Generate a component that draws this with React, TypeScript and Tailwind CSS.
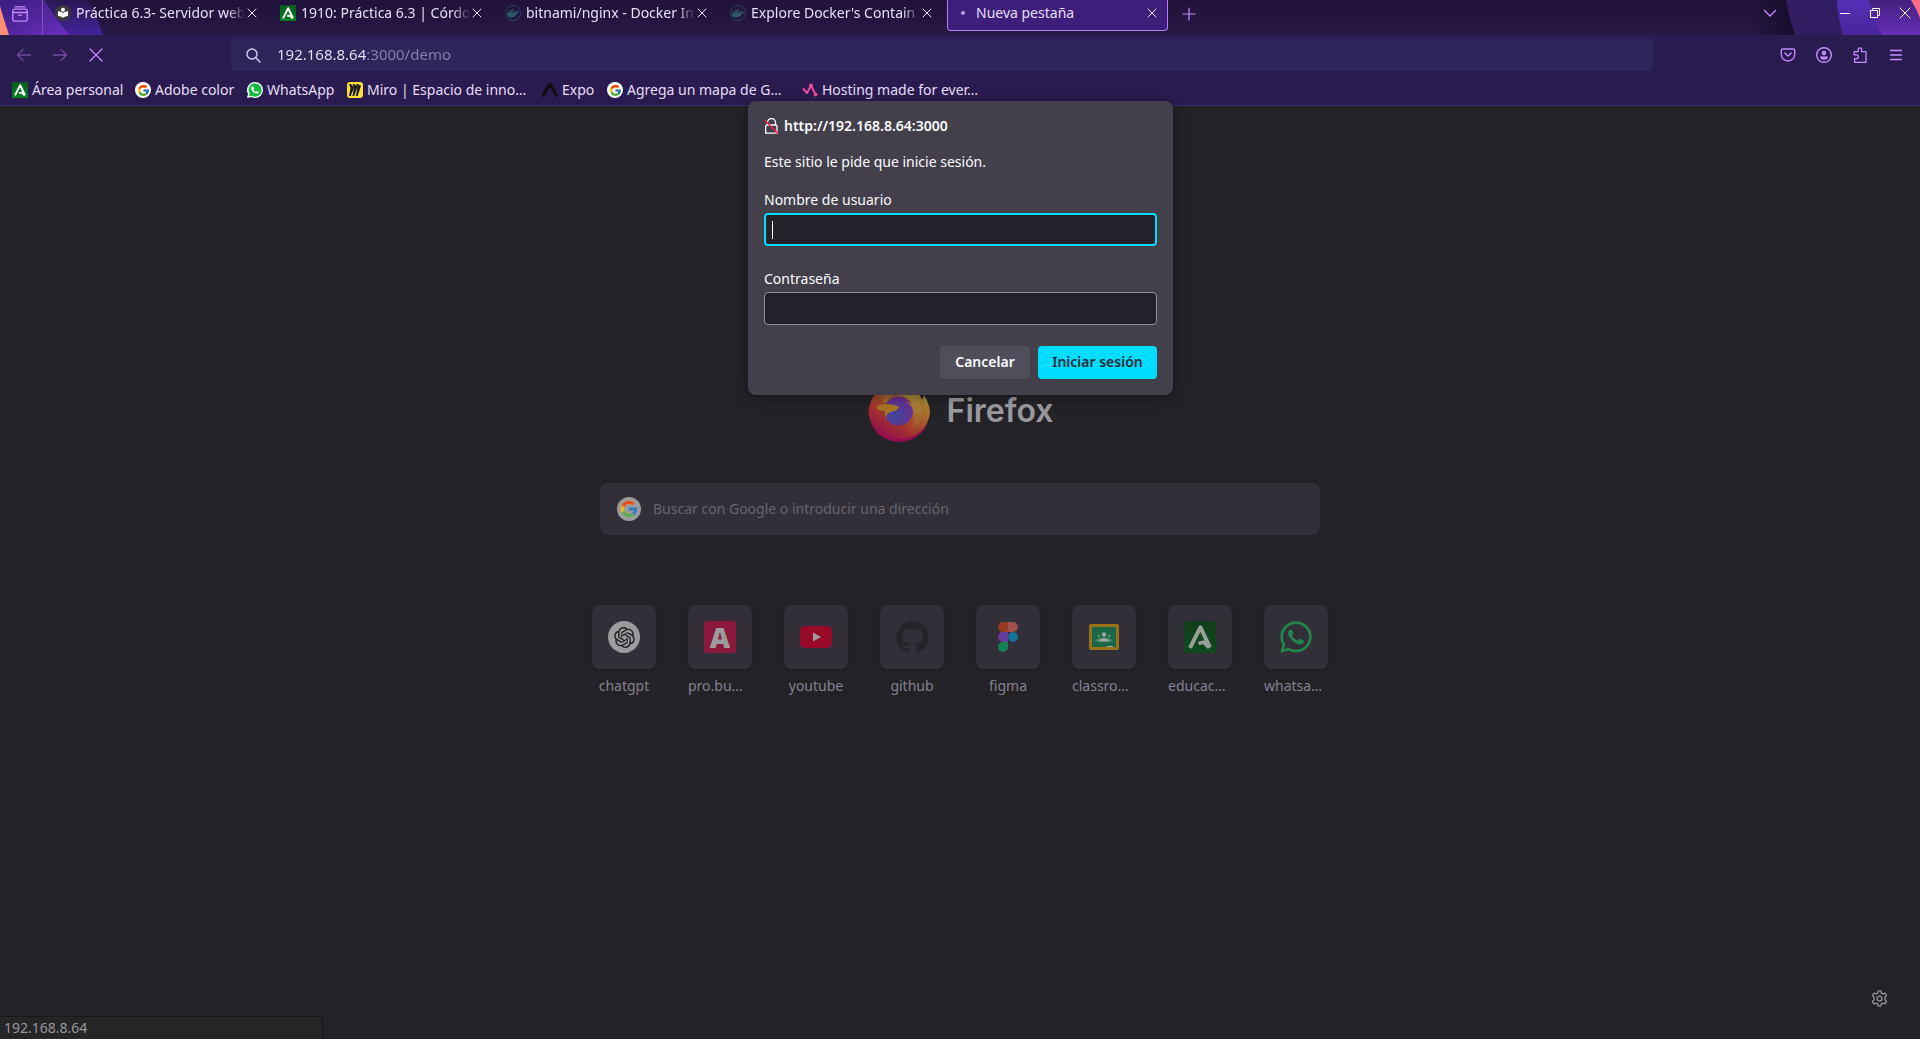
import type { ReactNode } from 'react';
import { FcGoogle } from 'react-icons/fc';
import { FaGithub, FaWhatsapp } from 'react-icons/fa';
import { RiOpenaiFill } from 'react-icons/ri';
import { SiDocker, SiMiro, SiExpo } from 'react-icons/si';

function Cross({ size = 16, inset = 4, width = 1 }: { size?: number; inset?: number; width?: number }) {
  const b = size - inset;
  return (
    <svg width={size} height={size} viewBox={`0 0 ${size} ${size}`} stroke="currentColor" strokeWidth={width} strokeLinecap="round">
      <path d={`M${inset} ${inset}L${b} ${b}M${b} ${inset}L${inset} ${b}`} />
    </svg>
  );
}

function AndaluciaIcon({ size = 16, round = 0, from = '#0a5a22', to = '#00801f', fg = '#fff' }: { size?: number; round?: number; from?: string; to?: string; fg?: string }) {
  const id = `and-${size}`;
  return (
    <svg width={size} height={size} viewBox="0 0 16 16">
      <defs>
        <linearGradient id={id} x1="0" y1="0" x2="0" y2="1">
          <stop offset="0" stopColor={from} />
          <stop offset="1" stopColor={to} />
        </linearGradient>
      </defs>
      <rect width="16" height="16" rx={round} fill={`url(#${id})`} />
      <path d="M3 13.4L8.2 3.2L13 13.2" fill="none" stroke={fg} strokeWidth="2" strokeLinejoin="round" />
      <path d="M7.2 11.2L9.8 10.6L12.6 13.4" fill="none" stroke={fg} strokeWidth="1.8" />
    </svg>
  );
}

function DockerIcon() {
  return (
    <span className="flex size-4 items-center justify-center rounded-full border border-[#25465c] text-[#2b5a68]">
      <SiDocker size={12} />
    </span>
  );
}

function BookIcon() {
  return (
    <svg width="16" height="16" viewBox="0 0 16 16">
      <circle cx="8" cy="8" r="8" fill="#3b3b3f" />
      <circle cx="8" cy="4.8" r="2" fill="#fff" />
      <path d="M3 6.2Q6 6 8 8Q10 6 13 6.2V11Q10 11 8 12.8Q6 11 3 11Z" fill="#fff" />
    </svg>
  );
}

function GoogleBadge() {
  return (
    <span className="flex size-4 items-center justify-center rounded-full bg-white">
      <FcGoogle size={13} />
    </span>
  );
}

function WhatsappBadge() {
  return (
    <svg width="16" height="16" viewBox="0 0 24 24">
      <path d="M12 0a12 12 0 0 1 0 24a12 12 0 0 1-5.600-1.400L0 24l1.600-6A12 12 0 0 1 12 0Z" fill="#fff" />
      <path d="M12 2a10 10 0 0 1 0 20a10 10 0 0 1-5.200-1.500L3 21.300l1-3.900A10 10 0 0 1 12 2Z" fill="#11b93f" />
      <path d="M8.500 6.500c-.9 0-2 1.100-2 2.700c0 3.500 4.800 8.200 8.300 8.200c1.600 0 2.900-1.100 2.900-2.300c0-.5-2.400-1.700-2.800-1.700c-.5 0-1 1.500-1.500 1.500c-1 0-3.700-2.400-3.900-3.600c0-.6 1-1 1-1.600c0-.5-.9-3.200-2-3.200Z" fill="#fff" />
    </svg>
  );
}

function MiroIcon() {
  return (
    <span className="flex size-4 items-center justify-center rounded-[3px] bg-[#ffdd33] text-[#1c1c1e]">
      <SiMiro size={12} />
    </span>
  );
}

function HostingIcon() {
  return (
    <svg width="16" height="16" viewBox="0 0 16 16" fill="none" stroke="#ea4c9b" strokeWidth="2" strokeLinejoin="round" strokeLinecap="round">
      <path d="M1.500 7L5 11L9 3.500L13.500 12.500" />
      <circle cx="9" cy="3.500" r="1" fill="#ea4c9b" />
      <circle cx="13.500" cy="12.500" r="1" fill="#ea4c9b" />
    </svg>
  );
}

const tabs: { title: string; icon: ReactNode; active?: boolean }[] = [
  { title: 'Práctica 6.3- Servidor web', icon: <BookIcon /> },
  { title: '1910: Práctica 6.3 | Córdo', icon: <AndaluciaIcon /> },
  { title: 'bitnami/nginx - Docker Im', icon: <DockerIcon /> },
  { title: "Explore Docker's Contain", icon: <DockerIcon /> },
  { title: 'Nueva pestaña', icon: <span className="size-1 rounded-full bg-[#b9a3e6]" />, active: true },
];

const bookmarks: { label: string; icon: ReactNode; width: string }[] = [
  { label: 'Área personal', icon: <AndaluciaIcon />, width: 'w-[123px]' },
  { label: 'Adobe color', icon: <GoogleBadge />, width: 'w-[112px]' },
  { label: 'WhatsApp', icon: <WhatsappBadge />, width: 'w-[100px]' },
  { label: 'Miro | Espacio de inno…', icon: <MiroIcon />, width: 'w-[195px]' },
  { label: 'Expo', icon: <SiExpo size={16} color="#0d0d12" />, width: 'w-[65px]' },
  { label: 'Agrega un mapa de G…', icon: <GoogleBadge />, width: 'w-[195px]' },
  { label: 'Hosting made for ever…', icon: <HostingIcon />, width: 'w-[195px]' },
];

function ThemeArt() {
  return (
    <>
      <svg className="absolute top-0 left-0" width="130" height="35" viewBox="0 0 130 35">
        <defs>
          <linearGradient id="artL" x1="0" y1="0" x2="1" y2="1">
            <stop offset="0" stopColor="#3a1c7c" />
            <stop offset="1" stopColor="#6b2fc0" />
          </linearGradient>
          <linearGradient id="artL2" x1="0" y1="0" x2="0" y2="1">
            <stop offset="0" stopColor="#2a1854" />
            <stop offset="1" stopColor="#43249a" />
          </linearGradient>
        </defs>
        <path d="M0 0H88Q97 16 103 35H0Z" fill="url(#artL2)" />
        <path d="M0 0H44Q55 18 69 35H0Z" fill="url(#artL)" />
        <path d="M0 6Q4 20 9 35H0Z" fill="#ff8f73" />
      </svg>
      <svg className="absolute top-0 right-0" width="170" height="35" viewBox="0 0 170 35">
        <defs>
          <linearGradient id="artR0" x1="0" y1="0" x2="1" y2="0">
            <stop offset="0" stopColor="#150d2c" stopOpacity="0" />
            <stop offset="1" stopColor="#150d2c" />
          </linearGradient>
          <linearGradient id="artR" x1="0" y1="0" x2="0" y2="1">
            <stop offset="0" stopColor="#5530b8" />
            <stop offset="1" stopColor="#47269a" />
          </linearGradient>
          <linearGradient id="artR2" x1="0" y1="0" x2="0" y2="1">
            <stop offset="0" stopColor="#43217f" />
            <stop offset="1" stopColor="#682db8" />
          </linearGradient>
        </defs>
        <path d="M0 0H36L45 35H0Z" fill="url(#artR0)" />
        <path d="M36 0H170V35H45Q39 18 36 0Z" fill="#321d62" />
        <path d="M87 0H170V35H93Q88 18 87 0Z" fill="url(#artR)" />
        <path d="M118 0H170V35H132Q124 18 118 0Z" fill="url(#artR2)" />
        <path d="M161 0H170V18Q166 8 161 0Z" fill="#ff6b86" />
      </svg>
    </>
  );
}

function TabStrip() {
  return (
    <div className="relative flex h-[35px] items-start bg-linear-to-b from-[#20123a] to-[#281845]">
      <ThemeArt />
      <div className="relative flex flex-1 items-start">
        <button aria-label="Firefox View" className="flex h-[27px] w-[42px] items-center justify-center pr-0.5 text-[#c58bff]">
          <svg width="16" height="16" viewBox="0 0 16 16" fill="none" stroke="currentColor" strokeWidth="1.300" strokeLinecap="round">
            <path d="M3 .8H13" />
            <rect x=".8" y="3.200" width="14.400" height="12" rx="1.800" />
            <path d="M.8 6.500H15.200M6.500 9.200H9.500" />
          </svg>
        </button>
        <div className="h-[35px] w-px bg-[#7a56b8]" />
        <div className="ml-1 flex gap-1" role="tablist">
          {tabs.map((t) => (
            <div
              key={t.title}
              role="tab"
              aria-selected={!!t.active}
              className={
                t.active
                  ? 'flex h-[31px] w-[221px] items-center rounded-b border-x border-b border-[#b47cff] bg-[#3d1f7b] pr-[7px] pb-1 pl-[7px]'
                  : 'flex h-[31px] w-[221px] items-center px-2 pb-[5px]'
              }
            >
              <span className="mr-[5px] flex size-4 shrink-0 items-center justify-center">{t.icon}</span>
              <span
                className={
                  t.active
                    ? 'min-w-0 flex-1 whitespace-nowrap text-[#e6def6]'
                    : '-mr-1 min-w-0 flex-1 overflow-hidden whitespace-nowrap text-[#e6def6] mask-[linear-gradient(to_left,transparent_3px,black_20px)]'
                }
              >
                {t.title}
              </span>
              <button aria-label="Cerrar pestaña" className="shrink-0 text-[#ece4fa]">
                <Cross />
              </button>
            </div>
          ))}
        </div>
        <button aria-label="Nueva pestaña" className="ml-[5px] flex h-[27px] w-8 items-center justify-center text-[#c58bff]">
          <svg width="14" height="14" viewBox="0 0 14 14" stroke="currentColor" strokeWidth="1.200" strokeLinecap="round">
            <path d="M7 1V13M1 7H13" />
          </svg>
        </button>
      </div>
      <div className="relative flex items-start text-white">
        <button aria-label="Listar pestañas" className="mr-[45px] flex h-[26px] w-[30px] items-center justify-center text-[#c58bff]">
          <svg width="14" height="14" viewBox="0 0 14 14" fill="none" stroke="currentColor" strokeWidth="1.400" strokeLinecap="round" strokeLinejoin="round">
            <path d="M1.500 4.500L7 10L12.500 4.500" />
          </svg>
        </button>
        <button aria-label="Minimizar" className="flex h-[26px] w-[30px] items-center justify-center">
          <span className="h-px w-2.5 bg-white" />
        </button>
        <button aria-label="Restaurar" className="flex h-[26px] w-[30px] items-center justify-center">
          <svg width="10" height="10" viewBox="0 0 10 10" fill="none" stroke="currentColor">
            <path d="M.5 2.500H7.500V9.500H.5ZM2.500 2.500V.5H9.500V7.500H7.500" />
          </svg>
        </button>
        <button aria-label="Cerrar" className="flex h-[26px] w-[30px] items-center justify-center">
          <Cross size={12} inset={1} />
        </button>
      </div>
    </div>
  );
}

function NavBar() {
  return (
    <div className="flex h-10 items-center px-1.5 text-[#c58bff]">
      <button aria-label="Atrás" disabled className="flex h-8 w-9 items-center justify-center text-[#704a9e]">
        <svg width="16" height="16" viewBox="0 0 16 16" fill="none" stroke="currentColor" strokeWidth="1.300" strokeLinecap="round" strokeLinejoin="round">
          <path d="M14.500 8H1.500M7 2.500L1.500 8L7 13.500" />
        </svg>
      </button>
      <button aria-label="Adelante" disabled className="flex h-8 w-9 items-center justify-center text-[#704a9e]">
        <svg width="16" height="16" viewBox="0 0 16 16" fill="none" stroke="currentColor" strokeWidth="1.300" strokeLinecap="round" strokeLinejoin="round">
          <path d="M1.500 8H14.500M9 2.500L14.500 8L9 13.500" />
        </svg>
      </button>
      <button aria-label="Detener" className="flex h-8 w-9 items-center justify-center">
        <Cross size={16} inset={2} width={1.3} />
      </button>
      <div className="mx-[117px] flex h-8 flex-1 items-center rounded bg-[#2e255b] pl-[15px]">
        <svg className="shrink-0 text-[#d9cdf2]" width="15" height="15" viewBox="0 0 15 15" fill="none" stroke="currentColor" strokeWidth="1.400" strokeLinecap="round">
          <circle cx="6" cy="6" r="5" />
          <path d="M9.800 9.800L14 14" />
        </svg>
        <input
          aria-label="Dirección"
          defaultValue="192.168.8.64:3000/demo"
          className="ml-4 h-6 flex-1 bg-[linear-gradient(to_right,#ece6fa_89px,#8a80ab_89px)] bg-clip-text pb-0.5 text-[15px] text-transparent outline-none"
        />
      </div>
      <button aria-label="Guardar en Pocket" className="flex h-8 w-9 items-center justify-center">
        <svg width="16" height="16" viewBox="0 0 16 16" fill="none" stroke="currentColor" strokeWidth="1.400" strokeLinecap="round" strokeLinejoin="round">
          <path d="M2.700 2H13.300Q14.700 2 14.700 3.400V7.500A6.700 6.500 0 0 1 1.300 7.500V3.400Q1.300 2 2.700 2ZM4.800 6L8 9L11.200 6" />
        </svg>
      </button>
      <button aria-label="Cuenta" className="flex h-8 w-9 items-center justify-center">
        <svg width="16" height="16" viewBox="0 0 16 16" fill="currentColor">
          <circle cx="8" cy="8" r="7.300" fill="none" stroke="currentColor" strokeWidth="1.400" />
          <circle cx="8" cy="6" r="2.300" />
          <path d="M3.800 10.200Q3.800 9.600 4.600 9.600H11.400Q12.200 9.600 12.200 10.200Q11.300 12.700 8 12.700Q4.700 12.700 3.800 10.200Z" />
        </svg>
      </button>
      <button aria-label="Extensiones" className="flex h-8 w-9 items-center justify-center">
        <svg width="16" height="16" viewBox="0 0 16 16" fill="none" stroke="currentColor" strokeWidth="1.300" strokeLinejoin="round">
          <path d="M2.600 15.300V11.700H4.500A1.900 1.900 0 0 0 4.500 7.900H2.200V4.700H6.200V2.500A1.700 1.700 0 0 1 9.600 2.500V4.700H14V15.300Z" />
        </svg>
      </button>
      <button aria-label="Menú" className="flex h-8 w-9 items-center justify-center">
        <svg width="14" height="14" viewBox="0 0 14 14" stroke="currentColor" strokeWidth="1.300" strokeLinecap="round">
          <path d="M1.500 2.500H12.500M1.500 7H12.500M1.500 11.500H12.500" />
        </svg>
      </button>
    </div>
  );
}

function BookmarksBar() {
  return (
    <div className="flex h-[30px] items-center pl-3 text-[#e6def6]">
      {bookmarks.map((b) => (
        <a key={b.label} href="#" className={`flex items-center gap-1 whitespace-nowrap ${b.width}`}>
          <span className="flex size-4 shrink-0 items-center justify-center">{b.icon}</span>
          {b.label}
        </a>
      ))}
    </div>
  );
}

function FirefoxLogo() {
  return (
    <svg width="64" height="64" viewBox="0 0 64 64">
      <defs>
        <linearGradient id="ffBody" x1=".85" y1=".1" x2=".25" y2=".95">
          <stop offset="0" stopColor="#a89a3a" />
          <stop offset=".35" stopColor="#a8682b" />
          <stop offset=".7" stopColor="#a0322c" />
          <stop offset="1" stopColor="#940f4c" />
        </linearGradient>
        <radialGradient id="ffGlobe" cx=".4" cy=".65" r=".7">
          <stop offset="0" stopColor="#40469a" />
          <stop offset="1" stopColor="#6f2a8f" />
        </radialGradient>
        <linearGradient id="ffTail" x1=".5" y1="0" x2=".5" y2="1">
          <stop offset="0" stopColor="#a79a3c" />
          <stop offset="1" stopColor="#a3642f" stopOpacity=".3" />
        </linearGradient>
      </defs>
      <path d="M1.500 34Q1.500 21 10 12L13 6L19 12Q26 10 31 4L34 0Q38 8 48 10Q53 14 55 20L57 15Q63 25 63 33A31 30.500 0 0 1 1.500 34Z" fill="url(#ffBody)" />
      <path d="M2.500 40A31 30.500 0 0 0 62 40Q54 58 32 58.500Q10 58 2.500 40Z" fill="#940d4e" />
      <circle cx="31.500" cy="31" r="14.500" fill="url(#ffGlobe)" />
      <path d="M31 6Q48 12 53 24Q60 44 42 51Q50 40 46 30Q44 25 38 21.500Q43 22 46 25Q42 16 31 14Z" fill="url(#ffTail)" />
      <path d="M9 27Q13 24 19 24Q28 24 32 27Q30 31 25 31.500Q19 33 19 38Q17 36 18 31Q11 31 9 27Z" fill="#a87323" />
      <path d="M18 12Q25 9 29 13Q23 15 20 22L16 23Z" fill="#a36a2a" />
    </svg>
  );
}

const shortcuts: { label: string; icon: ReactNode; clipped?: boolean }[] = [
  {
    label: 'chatgpt',
    icon: (
      <span className="flex size-8 items-center justify-center rounded-full bg-[#9c9b9e] text-[#1c1b20]">
        <RiOpenaiFill size={25} />
      </span>
    ),
  },
  {
    label: 'pro.bu…',
    clipped: true,
    icon: <span className="flex size-8 items-center justify-center rounded-[3px] bg-[#8c173d] font-['Open_Sans'] text-[28px] leading-8 font-extrabold text-[#9c9b9e]">A</span>,
  },
  {
    label: 'youtube',
    icon: (
      <svg width="32" height="32" viewBox="0 0 32 32">
        <rect y="5" width="32" height="22" rx="5" fill="#990a28" />
        <path d="M13 11.500L21 16L13 20.500Z" fill="#9c9b9e" />
      </svg>
    ),
  },
  { label: 'github', icon: <FaGithub size={33} color="#232428" /> },
  {
    label: 'figma',
    icon: (
      <svg width="20" height="30" viewBox="0 0 20 30">
        <path d="M10 0H5A5 5 0 0 0 5 10H10Z" fill="#973a20" />
        <path d="M10 0H15A5 5 0 0 1 15 10H10Z" fill="#a0504a" />
        <path d="M10 10H5A5 5 0 0 0 5 20H10Z" fill="#663d9c" />
        <circle cx="15" cy="15" r="5" fill="#18719b" />
        <path d="M10 20H5A5 5 0 1 0 10 25Z" fill="#128154" />
      </svg>
    ),
  },
  {
    label: 'classro…',
    clipped: true,
    icon: (
      <svg width="30" height="26" viewBox="0 0 30 26">
        <rect width="30" height="26" rx="2" fill="#997217" />
        <rect x="3" y="3" width="24" height="20" fill="#1a6747" />
        <circle cx="10" cy="12" r="1.500" fill="#55876f" />
        <circle cx="20" cy="12" r="1.500" fill="#55876f" />
        <path d="M6 17Q8 14 11 14.500H19Q22 14 24 17.500H6Z" fill="#55876f" />
        <circle cx="15" cy="10.500" r="2.200" fill="#9fa6a3" />
        <path d="M10 17.500Q11 14 15 14Q19 14 20 17.500Z" fill="#9fa6a3" />
        <path d="M17.500 22H24V23H17.500Z" fill="#9fa6a3" />
      </svg>
    ),
  },
  { label: 'educac…', clipped: true, icon: <AndaluciaIcon size={32} round={1.5} from="#0f3d1b" to="#0f4a1c" fg="#97a099" /> },
  { label: 'whatsa…', clipped: true, icon: <FaWhatsapp size={36} color="#21854c" /> },
];

function LoginDialog() {
  return (
    <form
      role="dialog"
      aria-labelledby="login-title"
      onSubmit={(e) => e.preventDefault()}
      className="absolute -top-[5px] left-1/2 -ml-[212px] flex w-[425px] flex-col rounded-lg bg-[#43404c] px-4 pt-[15px] pb-4 text-[#fbfbfe] shadow-[0_2px_12px_rgba(0,0,0,0.4)]"
    >
      <h1 id="login-title" className="flex items-center gap-[5px] leading-5 font-semibold">
        <svg width="15" height="16" viewBox="0 0 15 16" fill="none" strokeWidth="1.300" strokeLinecap="round">
          <path d="M3.500 7V4.500A4 4 0 0 1 11.500 4.500V7M3 7H11.500Q13 7 13 8.500V15.200H1.700V8.500Q1.700 7 3 7" stroke="#fbfbfe" />
          <path d="M1 2.500L14 15.500" stroke="#ff1744" />
        </svg>
        http://192.168.8.64:3000
      </h1>
      <p className="mt-4 leading-5">Este sitio le pide que inicie sesión.</p>
      <label htmlFor="user" className="mt-[18px] leading-5">
        Nombre de usuario
      </label>
      <div className="relative mt-[3px] flex">
        <input id="user" className="h-[33px] flex-1 rounded bg-[#23222b] px-2 text-sm caret-transparent ring-2 ring-[#00ddff] outline-none ring-inset" />
        <span className="absolute top-2 left-2 h-[18px] w-px bg-white" />
      </div>
      <label htmlFor="password" className="mt-[23px] leading-5">
        Contraseña
      </label>
      <input id="password" type="password" className="mt-[3px] h-[33px] rounded border border-[#8f8f9d] bg-[#23222b] px-2 text-sm outline-none" />
      <div className="mt-[21px] flex justify-end gap-2 font-semibold">
        <button type="button" className="h-[33px] w-[90px] rounded bg-[#504e5a] pb-0.5">
          Cancelar
        </button>
        <button type="submit" className="h-[33px] w-[119px] rounded bg-[#00ddff] pb-0.5 text-[#2b2a33]">
          Iniciar sesión
        </button>
      </div>
    </form>
  );
}

export default function App() {
  return (
    <div className="flex min-h-screen flex-col bg-[#232227] font-['Noto_Sans',sans-serif] text-sm">
      <header className="border-b border-[#3a2e78] bg-linear-to-b from-[#281d50] to-[#2a1b4f]">
        <TabStrip />
        <NavBar />
        <BookmarksBar />
      </header>
      <main className="relative flex flex-1 flex-col items-center pt-[274px]">
        <div className="flex items-center gap-4">
          <FirefoxLogo />
          <span className="pb-0.5 font-['Inter'] text-[32px] leading-10 font-semibold text-[#99989c]">Firefox</span>
        </div>
        <div className="mt-[39px] flex h-[52px] w-[720px] max-w-full items-center rounded-lg bg-[#322f38] pl-[17px]">
          <span className="flex size-6 items-center justify-center rounded-full bg-[#9c9b9e]">
            <FcGoogle size={20} className="opacity-80" />
          </span>
          <input
            aria-label="Buscar"
            placeholder="Buscar con Google o introducir una dirección"
            className="ml-3 h-8 flex-1 bg-transparent pb-0.5 outline-none placeholder:text-[#68656f]"
          />
        </div>
        <nav className="mt-[70px] flex gap-8">
          {shortcuts.map((s) => (
            <a key={s.label} href="#" className="flex w-16 flex-col items-center gap-[7px] leading-5 text-[#85818f]">
              <span className="flex size-16 items-center justify-center rounded-lg bg-[#322f38] shadow-[0_1px_3px_rgba(0,0,0,0.2)]">{s.icon}</span>
              <span className={s.clipped ? 'self-start' : ''}>{s.label}</span>
            </a>
          ))}
        </nav>
        <button aria-label="Personalizar" className="absolute right-8 bottom-8 text-[#98979b]">
          <svg width="17" height="17" viewBox="0 0 16 16" fill="none" stroke="currentColor" strokeWidth="1.200" strokeLinejoin="round">
            <path d="M6.800 .8H9.200L9.700 2.900L11.200 3.700L13.200 3L14.600 5.200L13.100 6.900V9.100L14.600 10.800L13.200 13L11.200 12.300L9.700 13.100L9.200 15.200H6.800L6.300 13.100L4.800 12.300L2.800 13L1.400 10.800L2.900 9.100V6.900L1.400 5.200L2.800 3L4.800 3.700L6.300 2.900Z" />
            <circle cx="8" cy="8" r="2.300" />
          </svg>
        </button>
        <div className="absolute bottom-0 left-0 h-[23px] w-[323px] rounded-tr border-t border-r border-[#18181a] bg-[#252528] pl-1 leading-[22px] text-[#99989c]">192.168.8.64</div>
        <LoginDialog />
      </main>
    </div>
  );
}
